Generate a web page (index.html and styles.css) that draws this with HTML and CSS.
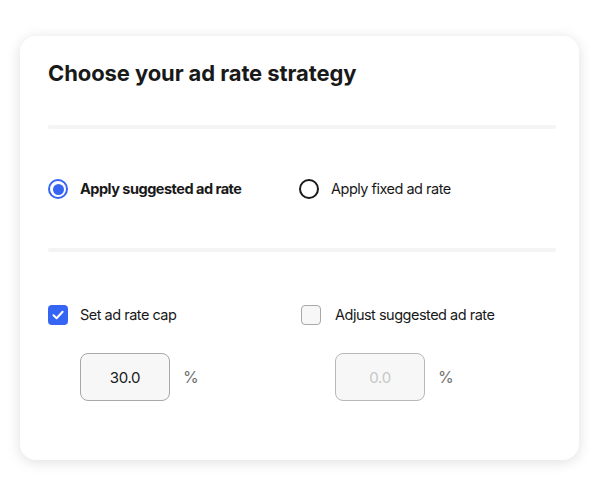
FILE: index.html
```html
<!DOCTYPE html>
<html>
<head>
<meta charset="utf-8">
<link rel="stylesheet" href="styles.css">
</head>
<body>
<div class="card">
  <h1 class="title">Choose your ad rate strategy</h1>
  <div class="divider"></div>
  <div class="row radios">
    <label class="opt">
      <span class="radio checked"><span class="dot"></span></span>
      <span class="label strong">Apply suggested ad rate</span>
    </label>
    <label class="opt opt-r1">
      <span class="radio"></span>
      <span class="label">Apply fixed ad rate</span>
    </label>
  </div>
  <div class="divider d2"></div>
  <div class="row checks">
    <div class="col">
      <label class="opt">
        <span class="check checked">
          <svg viewBox="0 0 20 20" width="20" height="20"><path d="M5.5 10.3 L8.6 13.3 L14.6 6.8" fill="none" stroke="#fff" stroke-width="2" stroke-linecap="round" stroke-linejoin="round"/></svg>
        </span>
        <span class="label">Set ad rate cap</span>
      </label>
      <div class="field">
        <div class="input">30.0</div>
        <span class="pct">%</span>
      </div>
    </div>
    <div class="col col-r">
      <label class="opt">
        <span class="check"></span>
        <span class="label lbl-r">Adjust suggested ad rate</span>
      </label>
      <div class="field">
        <div class="input disabled">0.0</div>
        <span class="pct">%</span>
      </div>
    </div>
  </div>
</div>
</body>
</html>
```

FILE: styles.css
```css
* { box-sizing: border-box; }
html, body { margin: 0; padding: 0; background: #fff; }
body {
  font-family: Inter, "Liberation Sans", sans-serif;
  color: #191919;
  padding: 36px 21px 36px 20px;
}
.card {
  width: 559px;
  height: 424px;
  background: #fff;
  border-radius: 16px;
  box-shadow: 0 2px 14px rgba(0,0,0,0.13);
  padding: 23px 23px 0 28px;
}
.title {
  margin: 0;
  font-size: 22px;
  line-height: 28px;
  font-weight: 700;
  letter-spacing: -0.1px;
}
.divider {
  margin-top: 38px;
  height: 4px;
  border-radius: 2px;
  background: #f4f4f4;
}
.row {
  display: grid;
  grid-template-columns: 251px 1fr;
}
.radios { margin-top: 50px; }
.d2 { margin-top: 49px; }
.checks { margin-top: 53px; }
.opt {
  display: flex;
  align-items: center;
  gap: 12px;
  height: 20px;
}
.label { font-size: 14.5px; line-height: 20px; letter-spacing: -0.5px; }
.strong { font-weight: 700; }
.radio {
  width: 20px;
  height: 20px;
  border-radius: 50%;
  border: 2px solid #191919;
  display: flex;
  align-items: center;
  justify-content: center;
  flex: none;
}
.radio.checked { border-color: #3665f3; }
.dot { width: 11px; height: 11px; border-radius: 50%; background: #3665f3; }
.check {
  width: 20px;
  height: 20px;
  border-radius: 4px;
  border: 1px solid #a8a8a8;
  background: #f7f7f7;
  flex: none;
}
.check.checked { background: #3665f3; border: none; }
.check svg { display: block; }
.col-r { padding-left: 2px; }
.col-r .opt { gap: 14px; }
.field {
  display: flex;
  align-items: center;
  gap: 13px;
  margin-top: 28px;
  padding-left: 32px;
}
.col-r .field { padding-left: 34px; }
.input {
  width: 90px;
  height: 48px;
  border: 1px solid #a8a8a8;
  border-radius: 8px;
  background: #f7f7f7;
  display: flex;
  align-items: center;
  justify-content: center;
  font-size: 15px;
  letter-spacing: -0.3px;
}
.input.disabled { color: #c7c7c7; border-color: #b8b8b8; }
.pct { font-size: 16px; color: #707070; }
```
